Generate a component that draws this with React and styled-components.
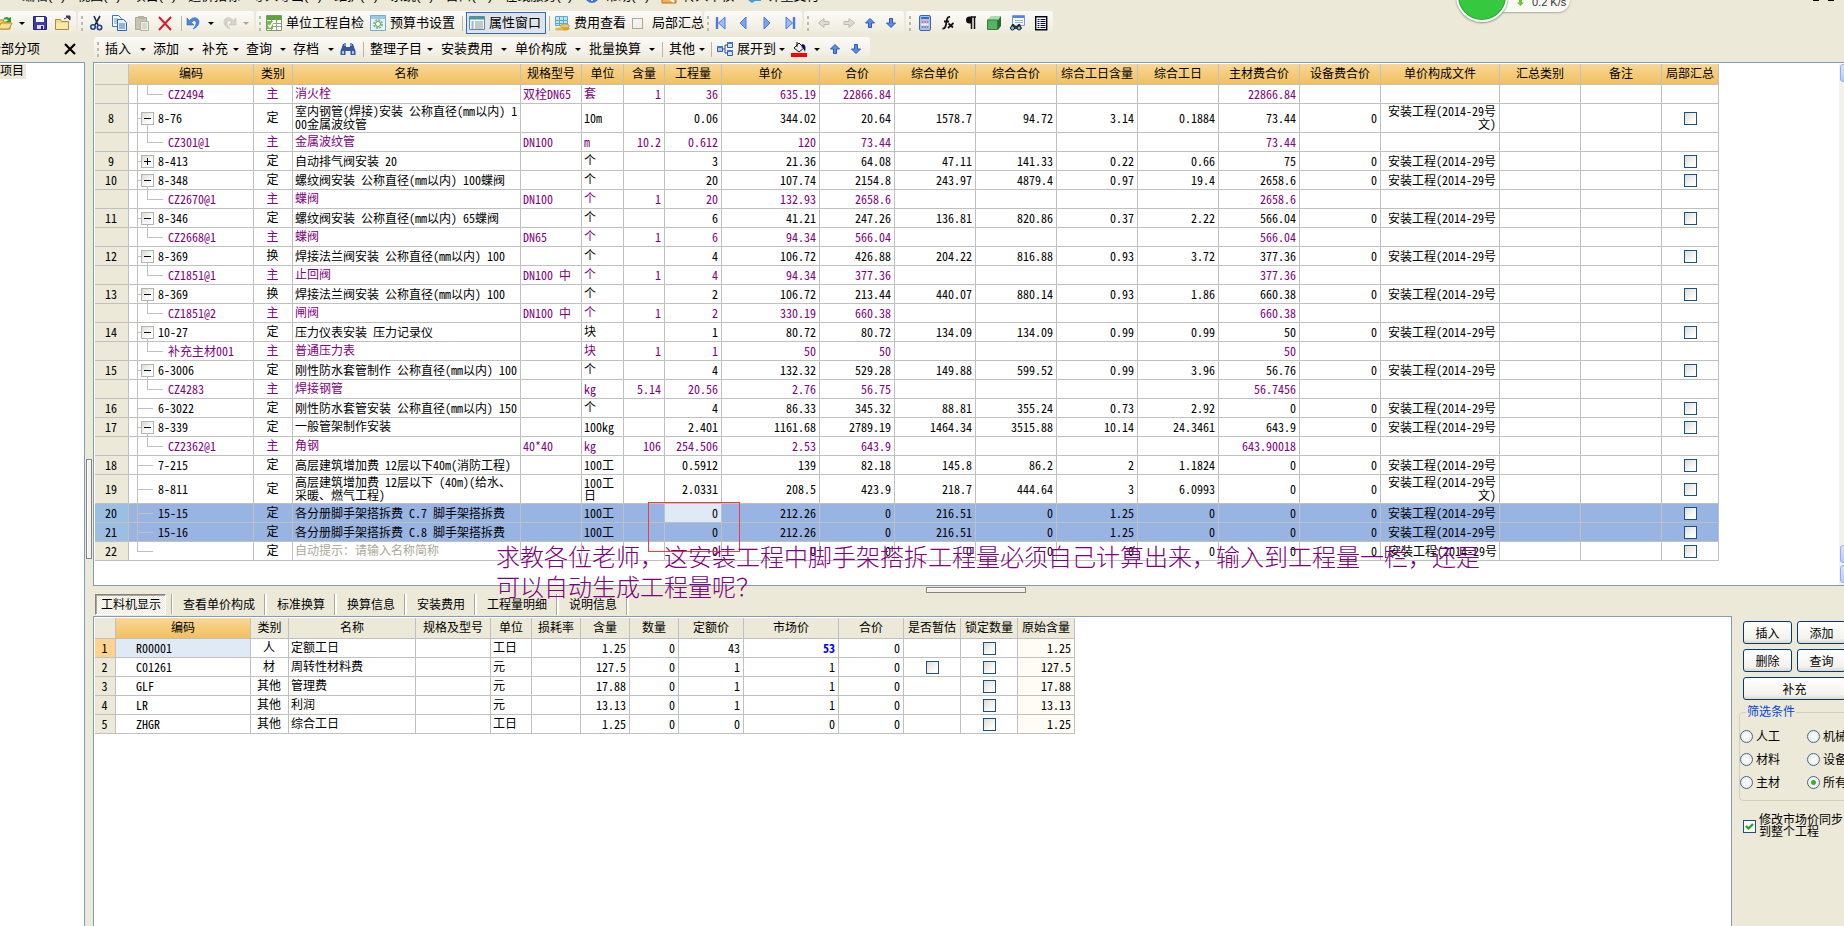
import React from "react";
import styled, { createGlobalStyle, css } from "styled-components";

const GRID = "#c0c0c0";
const FACE = "#ece9d8";
const EDGE = "#7f9db9";
const PURPLE = "#800080";

const GlobalStyle = createGlobalStyle`
    * { box-sizing: border-box; }
    body {
        margin: 0;
        background: ${FACE};
        color: #000;
        font-family: "Liberation Sans", "Noto Sans CJK SC", sans-serif;
        font-size: 12px;
        line-height: 12px;
        overflow: hidden;
    }
    button, input { font-family: inherit; margin: 0; }
    svg { display: block; flex: none; }
`;

const Page = styled.div`
    position: relative;
    display: flex;
    flex-direction: column;
    height: 100vh;
    overflow: hidden;
`;

/* ---------- menu and tool bars ---------- */

const MenuBar = styled.nav`
    display: flex;
    align-items: flex-end;
    gap: 12px;
    height: 11px;
    padding: 0 0 7px 22px;
    font-size: 13px;
    line-height: 16px;
    overflow: hidden;
`;

const MenuItem = styled.a`
    display: flex;
    align-items: center;
    gap: 5px;
    color: inherit;
    text-decoration: none;
    white-space: nowrap;
`;

const ToolRow = styled.div`
    display: flex;
    gap: 2px;
    height: ${(p) => p.$h}px;
    flex: none;
`;

const ToolGroup = styled.div`
    display: flex;
    align-items: center;
    height: 24px;
    margin-left: ${(p) => (p.$first ? "-4px" : 0)};
    padding-right: ${(p) => p.$end || 0}px;
    border-radius: 3px;
    background: linear-gradient(#fbfaf7, #f3f1e7 60%, #ebe8d8);
    flex: none;
`;

const Tool = styled.button`
    display: flex;
    align-items: center;
    justify-content: ${(p) => (p.$left ? "flex-start" : "center")};
    gap: 4px;
    width: ${(p) => p.$w}px;
    height: 22px;
    padding: 0;
    border: 1px solid transparent;
    background: none;
    font-size: 13px;
    line-height: 16px;
    color: #000;
    white-space: nowrap;
    ${(p) => p.$on && css`
        padding-left: 2px;
        border-color: #316ac5;
        background: #dfe3ea;
    `}
`;

const DropTool = styled.button`
    display: flex;
    align-items: center;
    width: ${(p) => p.$w}px;
    height: 22px;
    padding: 0 0 0 3px;
    border: 0;
    background: none;
    font-size: 13px;
    line-height: 16px;
    color: #000;
    white-space: nowrap;
    svg:first-child { margin-right: ${(p) => (p.$icon ? 4 : 0)}px; }
`;

const Caret = styled.i`
    width: 0;
    height: 0;
    margin-left: ${(p) => p.$gap || 0}px;
    border: 3px solid transparent;
    border-top-color: ${(p) => (p.$off ? "#aca899" : "#000")};
    border-bottom-width: 0;
`;

const Grip = styled.i`
    width: 8px;
    height: 15px;
    background: repeating-linear-gradient(#bcb9a8 0 3px, transparent 3px 6px) 3px 0 / 2px 100% no-repeat;
`;

const Sep = styled.i`
    width: ${(p) => p.$w}px;
    height: 15px;
    background: linear-gradient(#b9b6a6, #b9b6a6) center / 1px 100% no-repeat;
`;

const ToolCheck = styled.label`
    display: flex;
    align-items: center;
    gap: 9px;
    width: 74px;
    padding-left: 4px;
    font-size: 13px;
    line-height: 16px;
    white-space: nowrap;
    input {
        appearance: none;
        width: 11px;
        height: 11px;
        border: 1px solid #aca899;
        flex: none;
    }
`;

const SideTitle = styled.div`
    display: flex;
    align-items: center;
    justify-content: space-between;
    width: 92px;
    height: 24px;
    padding-right: 2px;
    margin-left: -12px;
    font-size: 13px;
    flex: none;
    span { white-space: nowrap; }
    button { padding: 0; border: 0; background: none; }
`;

const TitleWrap = styled.div`
    display: flex;
    width: 92px;
    flex: none;
`;

/* ---------- body ---------- */

const Body = styled.div`
    display: flex;
    flex: 1;
    min-height: 0;
`;

const TreePane = styled.aside`
    width: 85px;
    padding-top: 1px;
    border: solid ${EDGE};
    border-width: 1px 1px 0 0;
    background: #fff;
    flex: none;
    overflow: hidden;
    span {
        display: block;
        width: 26px;
        height: 15px;
        line-height: 14px;
        background: ${FACE};
    }
`;

const Splitter = styled.div`
    display: flex;
    align-items: center;
    justify-content: center;
    flex: none;
    ${(p) => (p.$vertical ? "width: 8px; padding-top: 30px;" : "height: 8px; padding-left: 14px;")}
`;

const SplitGrip = styled.div`
    ${(p) => (p.$vertical ? "width: 6px; height: 100px;" : "width: 100px; height: 6px;")}
    border: 1px solid #848284;
    background: #f3f1e8;
    box-shadow: inset 1px 1px 0 #fff;
`;

const Main = styled.main`
    display: flex;
    flex-direction: column;
    flex: 1;
    min-width: 0;
`;

const UpperPane = styled.section`
    position: relative;
    display: flex;
    justify-content: space-between;
    padding: 1px 0 0 1px;
    border: 1px solid ${EDGE};
    border-right: 0;
    background: #fff;
    flex: none;
`;

const SheetArea = styled.div`
    padding-bottom: 24px;
`;

const ScrollBar = styled.div`
    display: flex;
    flex-direction: column;
    gap: 2px;
    width: 5px;
    padding-bottom: 2px;
    background: #f3f1ec;
    flex: none;
`;

const ScrollPart = styled.button`
    width: 6px;
    height: 18px;
    padding: 0;
    margin-left: 1px;
    margin-top: ${(p) => (p.$push ? "auto" : 0)};
    border: 1px solid #98aee0;
    border-radius: 3px 0 0 3px;
    background: linear-gradient(#d8e2fd, #b9cbf9);
`;

const Sheet = styled.table`
    table-layout: fixed;
    width: ${(p) => p.$w}px;
    border-collapse: separate;
    border-spacing: 0;
    background: #fff;
`;

const Th = styled.th`
    height: 21px;
    padding: 0;
    border: solid ${GRID};
    border-width: 0 1px 1px 0;
    background: ${(p) => (p.$plain ? FACE : "linear-gradient(#f9d797, #f1c05f)")};
    font-weight: normal;
    white-space: nowrap;
`;

const Tr = styled.tr`
    color: ${(p) => (p.$material ? PURPLE : "#000")};
    background: ${(p) => (p.$selected ? "#98b4e2" : "#fff")};
`;

const Td = styled.td`
    height: ${(p) => p.$h || 19}px;
    padding: ${(p) => (p.$flush ? 0 : "0 3px 0 2px")};
    border: solid ${GRID};
    border-width: 0 1px 1px 0;
    text-align: ${(p) => p.$align || "left"};
    white-space: pre;
    overflow: hidden;
    color: ${(p) => p.$color || "inherit"};
    font-weight: ${(p) => (p.$bold ? "bold" : "normal")};
    ${(p) => p.$bg && `background: ${p.$bg};`}
`;

const Half = styled.span`
    font-family: "Noto Sans CJK SC", monospace;
    font-feature-settings: "hwid";
`;

const line = (x, y, w, h) =>
    `linear-gradient(${GRID}, ${GRID}) ${x}px ${y} / ${w}px ${h} no-repeat`;

const treeLines = {
    open: [line(8, "0", 1, "100%"), line(8, "50%", 4, "1px"), line(18, "100%", 1, "50%")],
    closed: [line(8, "0", 1, "100%"), line(8, "50%", 4, "1px")],
    child: [line(8, "0", 1, "100%"), line(18, "0", 1, "50%"), line(18, "50%", 16, "1px")],
    leaf: [line(8, "0", 1, "100%"), line(8, "50%", 16, "1px")],
    last: [line(8, "0", 1, "50%"), line(8, "50%", 16, "1px")],
};

const TreeCell = styled.div`
    display: flex;
    align-items: center;
    gap: 4px;
    height: ${(p) => p.$h - 1}px;
    padding-left: ${(p) => ({ child: 39, leaf: 29, last: 29 }[p.$kind] || 12)}px;
    background: ${(p) => treeLines[p.$kind].join(", ")};
`;

const Expander = styled.button`
    display: flex;
    align-items: center;
    justify-content: center;
    width: 13px;
    height: 13px;
    padding: 0;
    border: 1px solid #b5b5b0;
    background: linear-gradient(135deg, #d9d9d4, #fff 70%);
`;

const Check = styled.input`
    appearance: none;
    display: block;
    width: 13px;
    height: 13px;
    margin: 0 0 0 20px;
    border: 1px solid #1c5180;
    background: linear-gradient(135deg, #dcdcd7, #fff 80%);
    flex: none;
    &:checked {
        background: #f8f8f5 url("data:image/svg+xml,%3Csvg xmlns='http://www.w3.org/2000/svg' width='11' height='11'%3E%3Cpath d='M2 5l2.5 2.5L9 3' fill='none' stroke='%2321a121' stroke-width='2.2'/%3E%3C/svg%3E") center no-repeat;
    }
`;

/* ---------- remarks drawn over the sheet ---------- */

const RedFrame = styled.div`
    position: absolute;
    left: 554px;
    top: 439px;
    width: 92px;
    height: 50px;
    border: 1px solid #f03c3c;
    pointer-events: none;
`;

const Remark = styled.p`
    position: absolute;
    left: 402px;
    top: 478px;
    margin: 0;
    color: ${PURPLE};
    font-family: "Noto Sans CJK SC", sans-serif;
    font-size: 24px;
    font-weight: 300;
    line-height: 30px;
    white-space: pre;
    pointer-events: none;
    z-index: 2;
`;

/* ---------- lower part ---------- */

const Lower = styled.div`
    display: flex;
    flex: 1;
    min-height: 0;
`;

const LowerMain = styled.div`
    display: flex;
    flex-direction: column;
    flex: 1;
    min-width: 0;
`;

const Tabs = styled.div`
    display: flex;
    height: 22px;
    padding-left: 2px;
    flex: none;
`;

const Tab = styled.button`
    height: 21px;
    padding: 0 10px;
    border: 0;
    border-right: 2px solid #fff;
    background: none;
    box-shadow: inset -1px 0 0 #aca899;
    font-size: 12px;
    line-height: 16px;
    color: #000;
    white-space: nowrap;
    ${(p) => p.$active && css`
        width: 71px;
        margin-right: 5px;
        padding: 1px 4px 0 5px;
        border: 1px solid #fff;
        border-top-color: #848284;
        border-left-color: #848284;
        box-shadow: inset 1px 1px 0 #aca899;
        background: repeating-conic-gradient(#fff 0 25%, #ece9d8 0 50%) 0 0 / 2px 2px;
    `}
`;

const TabRule = styled.i`
    width: 2px;
    height: 20px;
    background: linear-gradient(90deg, #aca899 50%, #fff 50%);
`;

const LowerPane = styled.section`
    flex: 1;
    padding: 1px 0 0 1px;
    border: 1px solid ${EDGE};
    border-bottom: 0;
    background: #fff;
`;

const Side = styled.aside`
    width: 112px;
    padding: 27px 0 0 11px;
    overflow: hidden;
    flex: none;
`;

const ButtonGrid = styled.div`
    display: grid;
    grid-template-columns: 49px 49px;
    gap: 5px 5px;
    width: 103px;
`;

const PushButton = styled.button`
    height: 23px;
    padding: 0;
    grid-column: ${(p) => (p.$wide ? "span 2" : "auto")};
    border: 1px solid #003c74;
    border-radius: 3px;
    background: linear-gradient(#fff, #f3f2ec 80%, #dcd8cb);
    font-size: 12px;
    color: #000;
`;

const FilterBox = styled.fieldset`
    display: grid;
    grid-template-columns: 67px 60px;
    align-content: start;
    gap: 10px 0;
    width: 140px;
    height: 95px;
    min-width: 0;
    margin: 6px 0 0 -4px;
    padding: 12px 0 0 0;
    border: 1px solid #d0d0bf;
    border-radius: 4px;
    legend {
        margin-left: 6px;
        padding: 0 1px;
        color: #0046d5;
    }
`;

const RadioLabel = styled.label`
    display: flex;
    align-items: center;
    gap: 3px;
    height: 13px;
    white-space: nowrap;
    input {
        appearance: none;
        width: 13px;
        height: 13px;
        border: 1px solid #41678f;
        border-radius: 50%;
        background: radial-gradient(#fff, #e4e4df);
    }
    input:checked {
        background: radial-gradient(#2fb52f 0 2px, #f4f4f0 3px);
    }
`;

const SyncLabel = styled.label`
    display: flex;
    align-items: center;
    gap: 3px;
    margin-top: 13px;
    white-space: pre;
    input { margin: 0; }
`;

/* ---------- floating speed meter ---------- */

const Meter = styled.div`
    position: absolute;
    top: -29px;
    left: 1456px;
    display: flex;
    align-items: flex-end;
    width: 114px;
    height: 50px;
`;

const MeterBall = styled.div`
    width: 52px;
    height: 52px;
    margin-bottom: -1px;
    border: 2px solid #fff;
    border-radius: 50%;
    background: #36c940;
    box-shadow: 0 1px 2px #8a8878, inset 0 0 0 1px #23ac30;
    flex: none;
    z-index: 1;
`;

const MeterText = styled.div`
    display: flex;
    align-items: center;
    gap: 8px;
    width: 82px;
    height: 24px;
    margin: 0 0 9px -20px;
    padding: 4px 0 0 29px;
    border-radius: 0 12px 12px 0;
    background: #fafaf5;
    box-shadow: 0 1px 2px #aaa899;
    font-size: 11px;
    color: #333;
    white-space: nowrap;
`;

const WindowMarks = styled.div`
    position: absolute;
    top: 0;
    right: 10px;
    display: flex;
    gap: 9px;
    i { width: 6px; height: 1px; background: #000; }
`;

const blue = "#4a7be0";

const glyphs = {
    open: <><path d="M1 5h5l1 2h6v7H1z" fill="#f2cf63" stroke="#b8892a" /><path d="M1 14l3-6h11l-3 6z" fill="#fbe28c" stroke="#b8892a" /><path d="M6 5c1-3 4-4 6-2l2-1v5H9l2-2c-1-1-3-1-5 0z" fill="#2f9a2f" /></>,
    save: <><path d="M1.5 1.5h12l1 1v12h-13z" fill="#3c3ca8" stroke="#24246e" /><path d="M4 2h8v5H4z" fill="#fff" /><path d="M5 10h7v4H5z" fill="#dde" /><path d="M9 11h2v3H9z" fill="#24246e" /></>,
    folder: <><path d="M.5 4.500h5l1 2h7v8H.5z" fill="#f4d98a" stroke="#b08a3c" /><path d="M1 8h12v6H1z" fill="#f9e7a9" /><path d="M9 4l4-2M11 1h4v4z" stroke="#335" fill="#446" /></>,
    cut: <><path d="M5 1l4 9M11 1L6 10" stroke="#1d2b4f" strokeWidth="1.6" fill="none" /><circle cx="4" cy="12" r="2.200" fill="none" stroke="#1e3f86" strokeWidth="1.600" /><circle cx="10.500" cy="12.500" r="2.200" fill="none" stroke="#1e3f86" strokeWidth="1.600" /></>,
    copy: <><path d="M1.500.5h6l3 3v8h-9z" fill="#fff" stroke="#3a72c8" /><path d="M3 4h4M3 6h4M3 8h4" stroke="#5a93e0" /><path d="M6.500 4.500h6l3 3v8h-9z" fill="#e8f2ff" stroke="#2a62b8" /><path d="M8 9h6M8 11h6M8 13h6" stroke="#3a72c8" /></>,
    paste: <><path d="M1.500 2.500h11v12h-11z" fill="#c8c5b6" stroke="#aaa798" /><path d="M4 1h6v3H4z" fill="#b5b2a3" /><path d="M6.500 6.500h8v9h-8z" fill="#efeee8" stroke="#b5b2a3" /><path d="M8 9h5M8 11h5M8 13h5" stroke="#c5c2b3" /></>,
    del: <path d="M2 2l12 13M14 2L2 15" stroke="#dc1c2c" strokeWidth="2" />,
    undo: <path d="M1 3v7h7L5.500 7.500C8 4 11 6 10 9c-.5 2-1.500 3-3 5 5-2 7-6 5.500-9C11 2 7 1.500 3.500 5.500z" fill="#4d86dd" stroke="#3263b8" strokeWidth=".6" />,
    redo: <path d="M15 3v7H8l2.500-2.500C8 4 5 6 6 9c.5 2 1.500 3 3 5-5-2-7-6-5.500-9C5 2 9 1.500 12.500 5.500z" fill="#d6d4ca" stroke="#c2bfb2" strokeWidth=".6" />,
    sheetCheck: <><path d="M.5.5h15v15H.5z" fill="#fff" stroke="#7a9a6a" /><path d="M1 1h14v4H1z" fill="#56a832" /><path d="M5.500 5v10M10.500 5v10M1 8.500h14M1 11.500h14" stroke="#9a9a92" /><path d="M1 6h6v8H1z" fill="#76bb4c" /><path d="M2 10l2 2 3-5" stroke="#fff" fill="none" strokeWidth="1.500" /></>,
    gearDoc: <><path d="M.5.5h15v15H.5z" fill="#eaf4fb" stroke="#79a9cf" /><path d="M1 1h14v3H1z" fill="#9cc6ea" /><circle cx="8" cy="9" r="4" fill="none" stroke="#7db87d" strokeWidth="2" strokeDasharray="2 1.100" /><circle cx="8" cy="9" r="2.500" fill="#fff" stroke="#5da05d" /></>,
    props: <><path d="M.5 1.500h15v13H.5z" fill="#f5faf8" stroke="#5d8a94" /><path d="M1 2h14v2.500H1z" fill="#3a9aa8" /><path d="M2.500 7h2M2.500 9h2M2.500 11h2M2.500 13h2" stroke="#3a72c8" /><path d="M6 7h8M6 9h8M6 11h8M6 13h8" stroke="#8a9a9a" /></>,
    cost: <><path d="M1.500 1.500h12v9h-12z" fill="#bfe3f8" stroke="#59a8dc" /><path d="M5.500 2v9M9.500 2v9M1 5.500h12M1 8.500h12" stroke="#59a8dc" /><ellipse cx="11" cy="13.500" rx="4.500" ry="2" fill="#d9a336" /><ellipse cx="11" cy="11" rx="4.500" ry="2" fill="#f0c85c" stroke="#b9852a" strokeWidth=".6" /><ellipse cx="5" cy="14" rx="4" ry="1.600" fill="#e6b648" /></>,
    first: <><path d="M4 2v12" stroke={blue} strokeWidth="2.400" /><path d="M12 2v12L5.500 8z" fill="#9dbcf5" stroke={blue} /></>,
    prev: <path d="M11 2v12L5 8z" fill="#7ba4f0" stroke={blue} />,
    next: <path d="M5 2v12l6-6z" fill="#7ba4f0" stroke={blue} />,
    last: <><path d="M12 2v12" stroke={blue} strokeWidth="2.400" /><path d="M4 2v12l6.500-6z" fill="#9dbcf5" stroke={blue} /></>,
    left: <path d="M2.500 8L8 3.500v3h5v3H8v3z" fill="#deddd6" stroke="#bbb9ae" />,
    right: <path d="M13.500 8L8 3.500v3H3v3h5v3z" fill="#deddd6" stroke="#bbb9ae" />,
    up: <path d="M8 3.500L12.500 8h-3v4.500h-3V8h-3z" fill="#5a8cf0" stroke="#2d58b8" />,
    down: <path d="M8 12.500L12.500 8h-3V3.500h-3V8h-3z" fill="#5a8cf0" stroke="#2d58b8" />,
    calc: <><rect x="2.500" y=".5" width="11" height="15" rx="1.500" fill="#a9c2ec" stroke="#44649e" /><path d="M4 2h8v2H4z" fill="#2f6fe0" /><path d="M4.500 7h7M4.500 9.500h7M4.500 12h7" stroke="#fff" strokeWidth="2" strokeDasharray="2 .7" /><path d="M4.500 7h7" stroke="#d04848" strokeWidth="1.600" strokeDasharray="2 .7" /><path d="M4.500 12h7" stroke="#3f5fb0" strokeWidth="1.400" strokeDasharray="2 .7" /></>,
    fx: <><path d="M10 2C7.500 1.500 7 4 6.500 7S5.500 14 2.500 13.500M4 6.500h5" stroke="#111" strokeWidth="1.800" fill="none" /><path d="M8.500 8.500l4.500 4M13.500 8l-5.500 5" stroke="#111" strokeWidth="1.700" /></>,
    para: <><path d="M8 2h5M8.500 2v12M11.500 2v12" stroke="#111" strokeWidth="1.500" /><path d="M9 1.500H6.500a3.500 3.500 0 000 7H9z" fill="#111" /></>,
    cube: <><path d="M1 5l4-4h10l-3 4z" fill="#a9dcae" /><path d="M1.500 5h10v9.500h-10z" fill="#58b262" stroke="#2e7d3a" /><path d="M12 5l3-4v10l-3 4z" fill="#27692f" /></>,
    find: <><path d="M3.500.5h12v10h-12z" fill="#f4f8ff" stroke="#7a9ad8" /><path d="M4 1h11v2H4z" fill="#4f83e4" /><path d="M6 5.500h8M6 7.500h8" stroke="#9bb0d8" /><path d="M1 14l2-5h2l1 2h2l1-2h2l2 5z" fill="#2b3442" /><circle cx="3.500" cy="13" r="2" fill="#8fb1e0" stroke="#18202c" /><circle cx="10" cy="13" r="2" fill="#8fb1e0" stroke="#18202c" /></>,
    list: <><path d="M2.700 1.700h11v13h-11z" fill="#fff" stroke="#000" strokeWidth="1.400" /><path d="M4.500 4.500h2M4.500 6.500h2M4.500 8.500h2M4.500 10.500h2M4.500 12.500h2M7.500 4.500h5M7.500 6.500h5M7.500 8.500h5M7.500 10.500h5M7.500 12.500h5" stroke="#00007a" /></>,
    bino: <><path d="M3 3h3v3h4V3h3l2.500 7v4h-5v-4h-5v4h-5v-4z" fill="#35589c" /><path d="M4 2h2v3H4zM10 2h2v3h-2z" fill="#6f94d8" /><path d="M2 10h2v3H2zM12 10h2v3h-2z" fill="#a9c6f4" /></>,
    nodes: <><path d="M5 8h3M8 4v8M8 4h3M8 12h3" stroke="#2c4f9e" fill="none" /><path d="M.5 5.500h5v5h-5z" fill="#a9c6f4" stroke="#2c5fae" /><path d="M10.500 1.500h5v5h-5zM10.500 9.500h5v5h-5z" fill="#d4e4fc" stroke="#2c5fae" /><path d="M10 1h6v2h-6zM10 9h6v2h-6zM0 5h6v2H0z" fill="#4676c8" /></>,
    bucket: <><path d="M3 7l5-5 5 5-5 4z" fill="#efefef" stroke="#111" /><path d="M6 1v5" stroke="#111" /><path d="M11 3c4 0 4 4 3 8C13 9 13 8 10.500 6z" fill="#12126e" /><path d="M0 12h16v4H0z" fill="#f00" /></>,
    close: <path d="M3 3l10 10M13 3L3 13" stroke="#000" strokeWidth="2.200" />,
    help: <><circle cx="8" cy="8" r="7" fill="#3d74d8" /><path d="M6 6a2 2 0 114 0c0 1.500-2 1.500-2 3M8 11v2" stroke="#fff" strokeWidth="1.600" fill="none" /></>,
    audit: <><path d="M1 1h14v14H1z" fill="#f3b24a" stroke="#b4702a" /><path d="M5 8l8 6" stroke="#fff" strokeWidth="2" /></>,
    pay: <><path d="M2 1h13v12H9l-3 2-4-3z" fill="#3f9ee0" /><path d="M9 3h5v9H9z" fill="#fff" /></>,
};

const Icon = ({ name }) => <svg width="16" height="16" viewBox="0 0 16 16" aria-hidden="true">{glyphs[name]}</svg>;

// latin runs are set half-width beside the full-width characters
const Mixed = ({ text }) => (
    <>
        {String(text).split(/([\x20-\x7e]+)/).filter(Boolean).map((part, i) =>
            /^[\x20-\x7e]/.test(part) ? <Half key={i}>{part}</Half> : part
        )}
    </>
);

const menus = [
    ["编辑(E)"], ["视图(V)"], ["项目(P)"], ["造价指标"], ["导入导出(D)"], ["维护(D)"], ["系统(S)"],
    ["窗口(W)"], ["在线服务(L)"], ["帮助(H)", "help"], ["转入审核", "audit"], ["计量支付", "pay"],
];

const FILE = "安装工程(2014-29号";

const upperCols = [
    ["", 34], ["编码", 125], ["类别", 39], ["名称", 228], ["规格型号", 61], ["单位", 42], ["含量", 41],
    ["工程量", 57], ["单价", 98], ["合价", 75], ["综合单价", 81], ["综合合价", 81], ["综合工日含量", 81],
    ["综合工日", 81], ["主材费合价", 81], ["设备费合价", 81], ["单价构成文件", 119], ["汇总类别", 81],
    ["备注", 81], ["局部汇总", 57],
];

// no, tree kind, code, type, name, spec, unit, then the ten numbers up to 设备费合价, then the file
const upperRows = [
    ["", "child", "CZ2494", "主", "消火栓", "双栓DN65", "套", "1", "36", "635.19", "22866.84", "", "", "", "", "22866.84", ""],
    ["8", "open", "8-76", "定", "室内钢管(焊接)安装 公称直径(mm以内) 1\n00金属波纹管", "", "10m", "", "0.06", "344.02", "20.64", "1578.7", "94.72", "3.14", "0.1884", "73.44", "0", FILE + "\n文)"],
    ["", "child", "CZ301@1", "主", "金属波纹管", "DN100", "m", "10.2", "0.612", "120", "73.44", "", "", "", "", "73.44", ""],
    ["9", "closed", "8-413", "定", "自动排气阀安装 20", "", "个", "", "3", "21.36", "64.08", "47.11", "141.33", "0.22", "0.66", "75", "0", FILE],
    ["10", "open", "8-348", "定", "螺纹阀安装 公称直径(mm以内) 100蝶阀", "", "个", "", "20", "107.74", "2154.8", "243.97", "4879.4", "0.97", "19.4", "2658.6", "0", FILE],
    ["", "child", "CZ2670@1", "主", "蝶阀", "DN100", "个", "1", "20", "132.93", "2658.6", "", "", "", "", "2658.6", ""],
    ["11", "open", "8-346", "定", "螺纹阀安装 公称直径(mm以内) 65蝶阀", "", "个", "", "6", "41.21", "247.26", "136.81", "820.86", "0.37", "2.22", "566.04", "0", FILE],
    ["", "child", "CZ2668@1", "主", "蝶阀", "DN65", "个", "1", "6", "94.34", "566.04", "", "", "", "", "566.04", ""],
    ["12", "open", "8-369", "换", "焊接法兰阀安装 公称直径(mm以内) 100", "", "个", "", "4", "106.72", "426.88", "204.22", "816.88", "0.93", "3.72", "377.36", "0", FILE],
    ["", "child", "CZ1851@1", "主", "止回阀", "DN100 中", "个", "1", "4", "94.34", "377.36", "", "", "", "", "377.36", ""],
    ["13", "open", "8-369", "换", "焊接法兰阀安装 公称直径(mm以内) 100", "", "个", "", "2", "106.72", "213.44", "440.07", "880.14", "0.93", "1.86", "660.38", "0", FILE],
    ["", "child", "CZ1851@2", "主", "闸阀", "DN100 中", "个", "1", "2", "330.19", "660.38", "", "", "", "", "660.38", ""],
    ["14", "open", "10-27", "定", "压力仪表安装 压力记录仪", "", "块", "", "1", "80.72", "80.72", "134.09", "134.09", "0.99", "0.99", "50", "0", FILE],
    ["", "child", "补充主材001", "主", "普通压力表", "", "块", "1", "1", "50", "50", "", "", "", "", "50", ""],
    ["15", "open", "6-3006", "定", "刚性防水套管制作 公称直径(mm以内) 100", "", "个", "", "4", "132.32", "529.28", "149.88", "599.52", "0.99", "3.96", "56.76", "0", FILE],
    ["", "child", "CZ4283", "主", "焊接钢管", "", "kg", "5.14", "20.56", "2.76", "56.75", "", "", "", "", "56.7456", ""],
    ["16", "leaf", "6-3022", "定", "刚性防水套管安装 公称直径(mm以内) 150", "", "个", "", "4", "86.33", "345.32", "88.81", "355.24", "0.73", "2.92", "0", "0", FILE],
    ["17", "open", "8-339", "定", "一般管架制作安装", "", "100kg", "", "2.401", "1161.68", "2789.19", "1464.34", "3515.88", "10.14", "24.3461", "643.9", "0", FILE],
    ["", "child", "CZ2362@1", "主", "角钢", "40*40", "kg", "106", "254.506", "2.53", "643.9", "", "", "", "", "643.90018", ""],
    ["18", "leaf", "7-215", "定", "高层建筑增加费 12层以下40m(消防工程)", "", "100工", "", "0.5912", "139", "82.18", "145.8", "86.2", "2", "1.1824", "0", "0", FILE],
    ["19", "leaf", "8-811", "定", "高层建筑增加费 12层以下 (40m)(给水、\n采暖、燃气工程)", "", "100工\n日", "", "2.0331", "208.5", "423.9", "218.7", "444.64", "3", "6.0993", "0", "0", FILE + "\n文)"],
    ["20", "leaf", "15-15", "定", "各分册脚手架搭拆费 C.7 脚手架搭拆费", "", "100工", "", "0", "212.26", "0", "216.51", "0", "1.25", "0", "0", "0", FILE],
    ["21", "leaf", "15-16", "定", "各分册脚手架搭拆费 C.8 脚手架搭拆费", "", "100工", "", "0", "212.26", "0", "216.51", "0", "1.25", "0", "0", "0", FILE],
    ["22", "last", "", "定", "自动提示：请输入名称简称", "", "", "", "0", "0", "0", "0", "0", "0", "0", "0", "0", "[" + FILE],
];

const lowerCols = [
    ["", 21], ["编码", 135], ["类别", 38], ["名称", 127], ["规格及型号", 75], ["单位", 41], ["损耗率", 49],
    ["含量", 49], ["数量", 49], ["定额价", 65], ["市场价", 95], ["合价", 65], ["是否暂估", 57],
    ["锁定数量", 57], ["原始含量", 57],
];

const lowerRows = [
    ["R00001", "人", "定额工日", "工日", "1.25", "0", "43", "53", "0"],
    ["C01261", "材", "周转性材料费", "元", "127.5", "0", "1", "1", "0"],
    ["GLF", "其他", "管理费", "元", "17.88", "0", "1", "1", "0"],
    ["LR", "其他", "利润", "元", "13.13", "0", "1", "1", "0"],
    ["ZHGR", "其他", "综合工日", "工日", "1.25", "0", "0", "0", "0"],
];

const Cols = ({ cols }) => <colgroup>{cols.map(([title, w], i) => <col key={i} width={w} />)}</colgroup>;

const sum = (cols) => cols.reduce((n, c) => n + c[1], 0);

const UpperRow = ({ row }) => {
    const [no, kind, code, type, name, spec, unit, ...rest] = row;
    const numbers = rest.slice(0, 10);
    const file = rest[10];
    const h = name.includes("\n") ? 29 : 19;
    const selected = no === "20" || no === "21";
    return (
        <Tr $material={kind === "child"} $selected={selected}>
            <Td $h={h} $align="center" $bg={selected ? "#9bbfe3" : FACE}><Mixed text={no} /></Td>
            <Td $h={h} $flush>
                <TreeCell $kind={kind} $h={h}>
                    {(kind === "open" || kind === "closed") &&
                        <Expander aria-label={kind === "open" ? "收起" : "展开"}>
                            <svg width="9" height="9"><path d={kind === "open" ? "M1 4.500h7" : "M1 4.500h7M4.500 1v7"} stroke="#000" /></svg>
                        </Expander>}
                    <span><Mixed text={code} /></span>
                </TreeCell>
            </Td>
            <Td $h={h} $align="center">{type}</Td>
            <Td $h={h} $color={no === "22" ? "#aca899" : undefined}><Mixed text={name} /></Td>
            <Td $h={h}><Mixed text={spec} /></Td>
            <Td $h={h}><Mixed text={unit} /></Td>
            {numbers.map((value, i) =>
                <Td key={i} $h={h} $align="right" $bg={no === "20" && i === 1 ? "#e0eaf6" : undefined}><Mixed text={value} /></Td>
            )}
            <Td $h={h} $align="right"><Mixed text={file || ""} /></Td>
            <Td $h={h} />
            <Td $h={h} />
            <Td $h={h}>{no && <Check type="checkbox" aria-label="局部汇总" />}</Td>
        </Tr>
    );
};

const CodeText = styled.div`
    padding: 1px 0 0 20px;
`;

const LowerRow = ({ row, index }) => {
    const [code, type, name, unit, content, ...numbers] = row;
    return (
        <Tr>
            <Td $align="center" $bg={index === 0 ? "#ffd38c" : FACE}><Mixed text={index + 1} /></Td>
            <Td $flush $bg={index === 0 ? "#e0eaf6" : undefined}><CodeText><Mixed text={code} /></CodeText></Td>
            <Td $align="center">{type}</Td>
            <Td>{name}</Td>
            <Td />
            <Td>{unit}</Td>
            <Td />
            <Td $align="right"><Mixed text={content} /></Td>
            {numbers.map((value, i) => {
                const edited = index === 0 && i === 2;
                return <Td key={i} $align="right" $bold={edited} $color={edited ? "#0000f0" : undefined}><Mixed text={value} /></Td>;
            })}
            <Td>{index === 1 && <Check type="checkbox" aria-label="是否暂估" />}</Td>
            <Td><Check type="checkbox" aria-label="锁定数量" /></Td>
            <Td $align="right" $bg="#fffbf5"><Mixed text={content} /></Td>
        </Tr>
    );
};

const IconTool = ({ name, w }) => <Tool $w={w} aria-label={name}><Icon name={name} /></Tool>;

const Drop = ({ label, w, gap, icon }) => (
    <DropTool $w={w} $icon={icon && label} aria-label={label || icon}>
        {icon && <Icon name={icon} />}
        {label}
        <Caret $gap={gap} />
    </DropTool>
);

const App = () => (
    <Page>
        <GlobalStyle />
        <MenuBar>
            {menus.map(([label, icon]) =>
                <MenuItem href="#" key={label}>{icon && <Icon name={icon} />}{label}</MenuItem>
            )}
        </MenuBar>

        <ToolRow $h={26}>
            <ToolGroup $first>
                <IconTool name="open" w={18} />
                <Tool $w={16} aria-label="最近"><Caret /></Tool>
                <IconTool name="save" w={20} />
                <IconTool name="folder" w={26} />
            </ToolGroup>
            <ToolGroup>
                <Grip />
                <IconTool name="cut" w={21} />
                <IconTool name="copy" w={23} />
                <IconTool name="paste" w={24} />
                <IconTool name="del" w={22} />
                <Sep $w={10} />
                <IconTool name="undo" w={16} />
                <Tool $w={18} aria-label="撤销列表"><Caret /></Tool>
                <IconTool name="redo" w={18} />
                <Tool $w={16} aria-label="恢复列表"><Caret $off /></Tool>
            </ToolGroup>
            <ToolGroup>
                <Grip />
                <Tool $w={102}><Icon name="sheetCheck" />单位工程自检</Tool>
                <Tool $w={93}><Icon name="gearDoc" />预算书设置</Tool>
                <Sep $w={7} />
                <Tool $w={80} $left $on><Icon name="props" />属性窗口</Tool>
                <Sep $w={6} />
                <Tool $w={76}><Icon name="cost" />费用查看</Tool>
                <ToolCheck><input type="checkbox" />局部汇总</ToolCheck>
            </ToolGroup>
            <ToolGroup>
                <Grip />
                <IconTool name="first" w={18} />
                <IconTool name="prev" w={26} />
                <IconTool name="next" w={22} />
                <IconTool name="last" w={24} />
            </ToolGroup>
            <ToolGroup>
                <Grip />
                <IconTool name="left" w={24} />
                <IconTool name="right" w={26} />
                <IconTool name="up" w={16} />
                <IconTool name="down" w={26} />
            </ToolGroup>
            <ToolGroup>
                <Grip />
                <IconTool name="calc" w={22} />
                <IconTool name="fx" w={24} />
                <IconTool name="para" w={22} />
                <IconTool name="cube" w={24} />
                <IconTool name="find" w={22} />
                <IconTool name="list" w={25} />
            </ToolGroup>
        </ToolRow>

        <ToolRow $h={25}>
            <TitleWrap>
                <SideTitle>
                    <span>分部分项</span>
                    <button aria-label="关闭"><Icon name="close" /></button>
                </SideTitle>
            </TitleWrap>
            <ToolGroup $end={6}>
                <Grip />
                <Drop label="插入" w={48} gap={9} />
                <Drop label="添加" w={49} gap={9} />
                <Drop label="补充" w={44} gap={5} />
                <Drop label="查询" w={47} gap={8} />
                <Drop label="存档" w={47} gap={9} />
                <IconTool name="bino" w={22} />
                <Sep $w={8} />
                <Drop label="整理子目" w={71} gap={5} />
                <Drop label="安装费用" w={74} gap={8} />
                <Drop label="单价构成" w={74} gap={8} />
                <Drop label="批量换算" w={72} gap={8} />
                <Sep $w={8} />
                <Drop label="其他" w={42} gap={4} />
                <Sep $w={6} />
                <Drop label="展开到" icon="nodes" w={74} gap={3} />
                <Drop icon="bucket" w={33} gap={7} />
                <IconTool name="up" w={27} />
                <IconTool name="down" w={16} />
            </ToolGroup>
        </ToolRow>

        <Body>
            <TreePane><span>项目</span></TreePane>
            <Splitter $vertical><SplitGrip $vertical /></Splitter>
            <Main>
                <UpperPane>
                    <SheetArea>
                        <Sheet $w={sum(upperCols)}>
                            <Cols cols={upperCols} />
                            <thead>
                                <tr>{upperCols.map(([title], i) => <Th key={i} $plain={i === 0}>{title}</Th>)}</tr>
                            </thead>
                            <tbody>
                                {upperRows.map((row, i) => <UpperRow key={i} row={row} />)}
                            </tbody>
                        </Sheet>
                    </SheetArea>
                    <ScrollBar>
                        <ScrollPart aria-label="向上" />
                        <ScrollPart $push aria-label="滑块" />
                        <ScrollPart aria-label="向下" />
                    </ScrollBar>
                    <RedFrame />
                    <Remark>{"求教各位老师，这安装工程中脚手架搭拆工程量必须自己计算出来，输入到工程量一栏，还是\n可以自动生成工程量呢？"}</Remark>
                </UpperPane>

                <Splitter><SplitGrip /></Splitter>

                <Lower>
                    <LowerMain>
                        <Tabs>
                            <Tab $active>工料机显示</Tab>
                            <TabRule />
                            {["查看单价构成", "标准换算", "换算信息", "安装费用", "工程量明细", "说明信息"].map((t) =>
                                <Tab key={t}>{t}</Tab>
                            )}
                        </Tabs>
                        <LowerPane>
                            <Sheet $w={sum(lowerCols)}>
                                <Cols cols={lowerCols} />
                                <thead>
                                    <tr>{lowerCols.map(([title], i) => <Th key={i} $plain={i !== 1}>{title}</Th>)}</tr>
                                </thead>
                                <tbody>
                                    {lowerRows.map((row, i) => <LowerRow key={i} row={row} index={i} />)}
                                </tbody>
                            </Sheet>
                        </LowerPane>
                    </LowerMain>
                    <Side>
                        <ButtonGrid>
                            <PushButton>插入</PushButton>
                            <PushButton>添加</PushButton>
                            <PushButton>删除</PushButton>
                            <PushButton>查询</PushButton>
                            <PushButton $wide>补充</PushButton>
                        </ButtonGrid>
                        <FilterBox>
                            <legend>筛选条件</legend>
                            {["人工", "机械", "材料", "设备", "主材", "所有"].map((t) =>
                                <RadioLabel key={t}><input type="radio" name="kind" defaultChecked={t === "所有"} />{t}</RadioLabel>
                            )}
                        </FilterBox>
                        <SyncLabel>
                            <Check type="checkbox" defaultChecked />
                            {"修改市场价同步\n到整个工程"}
                        </SyncLabel>
                    </Side>
                </Lower>
            </Main>
        </Body>

        <Meter>
            <MeterBall />
            <MeterText>
                <svg width="7" height="7"><path d="M3.500 7L0 3.500h2V0h3v3.500h2z" fill="#6cc830" /></svg>
                0.2 K/s
            </MeterText>
        </Meter>
        <WindowMarks><i /><i /></WindowMarks>
    </Page>
);

export default App;
